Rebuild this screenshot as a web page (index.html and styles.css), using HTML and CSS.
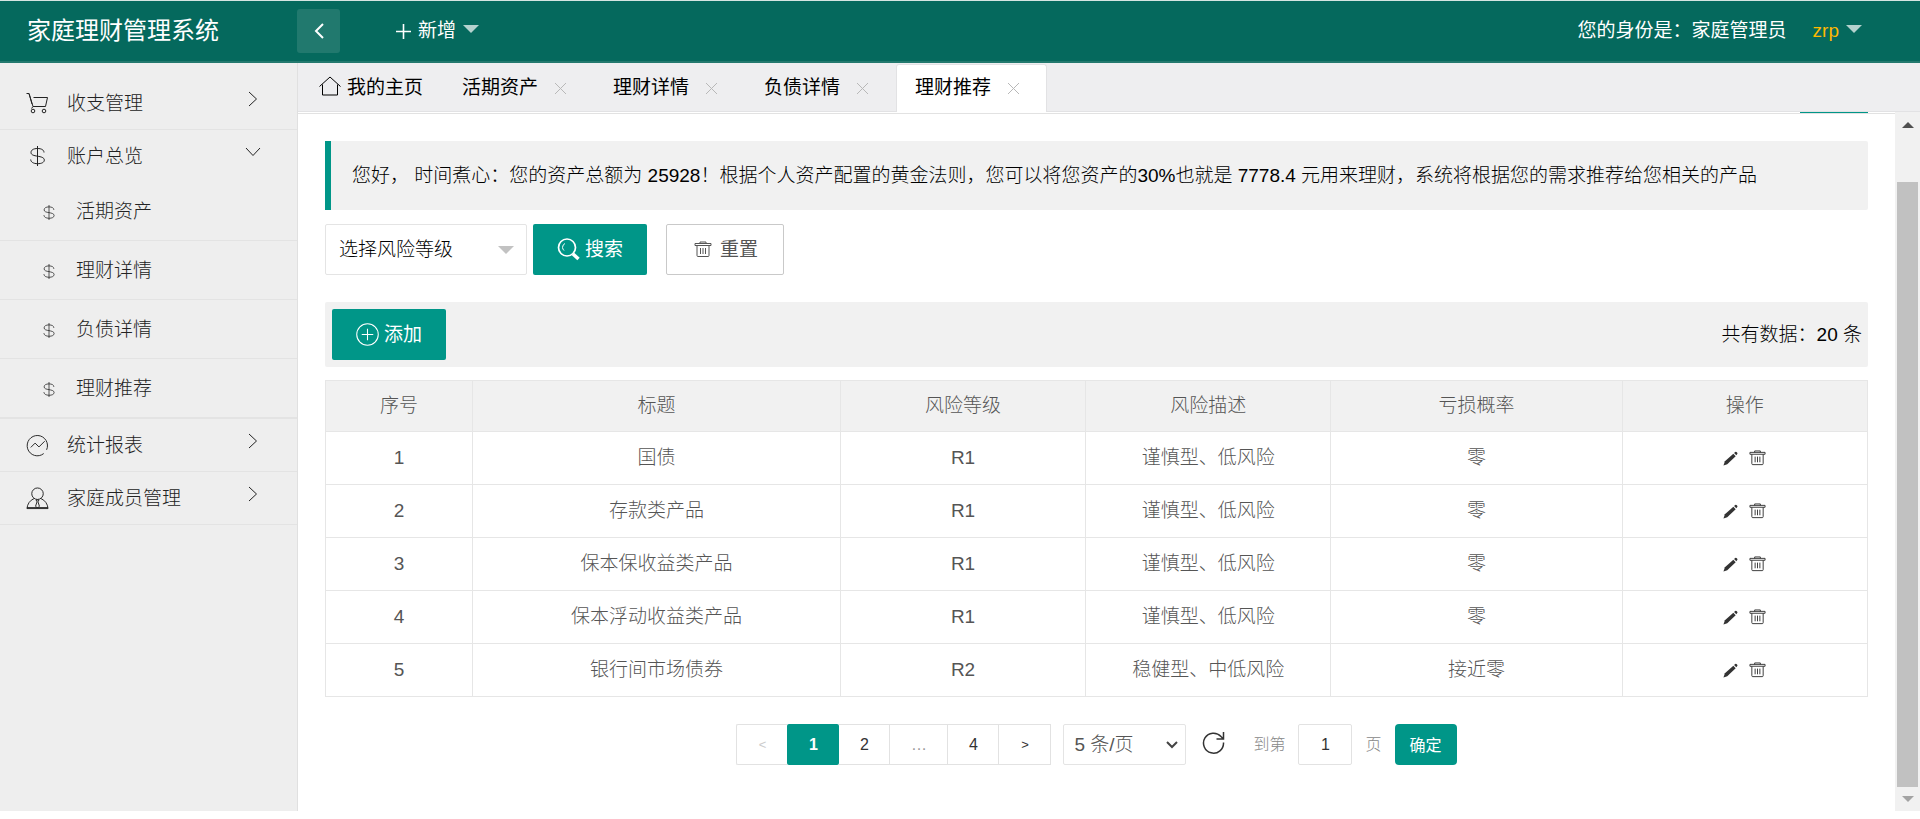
FILE: index.html
```html
<!DOCTYPE html>
<html lang="zh-CN">
<head>
<meta charset="utf-8">
<title>家庭理财管理系统</title>
<link rel="stylesheet" href="styles.css">
</head>
<body>
<svg class="sprite" aria-hidden="true">
  <symbol id="dollar" viewBox="0 0 16 22"><path d="M8 1v20M14.500 7.500C14.500 5 12 3.500 8 3.500S1.500 5 1.500 7.500C1.500 10 4.500 10.600 8 11.200S14.800 12.500 14.800 15 12 18.700 8 18.700 1.200 17 1.200 14.500"/></symbol>
  <symbol id="cart" viewBox="0 0 23 22"><path d="M0.500 1.500H3L7 14.500H19.500L21.500 5.500H7.500M3 1.500L6 12M7 14.500L5.500 16.500"/><circle cx="7" cy="19" r="1.800"/><circle cx="18" cy="19" r="1.800"/></symbol>
  <symbol id="chart" viewBox="0 0 24 24"><path d="M21.500 16.500A10.600 10.600 0 1 0 18.500 20.400M5 14L9.500 9.500 13.500 13.500 19.500 7.500"/></symbol>
  <symbol id="person" viewBox="0 0 24 24"><circle cx="12" cy="7" r="6"/><path d="M8.500 12C4 14 1.500 17.500 1 22.500H23C22.500 17.500 20 14 15.500 12M10.500 13.500H13.500L12.500 15.500 14 20 12 22 10 20 11.500 15.500ZM1 21.500H23"/></symbol>
  <symbol id="right" viewBox="0 0 10 16"><path d="M1 1L8.500 8 1 15"/></symbol>
  <symbol id="down" viewBox="0 0 16 10"><path d="M1 1L8 8.500 15 1"/></symbol>
  <symbol id="caret" viewBox="0 0 16 8"><path d="M0 0H16L8 8Z"/></symbol>
  <symbol id="close" viewBox="0 0 13 13"><path d="M1 1L12 12M12 1L1 12"/></symbol>
  <symbol id="trash" viewBox="0 0 18 18"><path d="M1 2.500H17V4.500H1ZM6 2.500V1H12V2.500M3 4.500V14.500Q3 15.500 4 15.500H14Q15 15.500 15 14.500V4.500M6.500 7V13M9 7V13M11.500 7V13"/></symbol>
  <symbol id="pencil" viewBox="0 0 16 16"><path d="M0.500 15.500L2 11 11 3 13.500 5.500 4.500 14Z"/><path d="M11.800 2L13 1Q14 .5 15 1.500T15 3.500L14.200 4.500Z"/></symbol>
</svg>

<header class="topbar">
  <h1 class="brand">家庭理财管理系统</h1>
  <button class="collapse" aria-label="收起菜单"><svg class="line" width="10" height="16" viewBox="0 0 10 16"><path d="M9 1L2 8l7 7"/></svg></button>
  <button class="topmenu">
    <svg class="line" width="15" height="15" viewBox="0 0 15 15"><path d="M7.500 0V15M0 7.500H15"/></svg>
    <span>新增</span><svg class="caret" width="16" height="8"><use href="#caret"/></svg>
  </button>
  <div class="identity">您的身份是：家庭管理员</div>
  <button class="topmenu user"><span>zrp</span><svg class="caret" width="16" height="8"><use href="#caret"/></svg></button>
</header>

<div class="body">
  <nav class="sidebar">
    <a class="item" href="#"><svg class="icon" width="23" height="22"><use href="#cart"/></svg><span>收支管理</span><svg class="arrow" width="10" height="16"><use href="#right"/></svg></a>
    <div class="group">
      <a class="item open" href="#"><svg class="icon" width="23" height="22"><use href="#dollar"/></svg><span>账户总览</span><svg class="arrow" width="16" height="10"><use href="#down"/></svg></a>
      <a class="sub" href="#"><svg class="icon" width="12" height="17"><use href="#dollar"/></svg>活期资产</a>
      <a class="sub" href="#"><svg class="icon" width="12" height="17"><use href="#dollar"/></svg>理财详情</a>
      <a class="sub" href="#"><svg class="icon" width="12" height="17"><use href="#dollar"/></svg>负债详情</a>
      <a class="sub" href="#"><svg class="icon" width="12" height="17"><use href="#dollar"/></svg>理财推荐</a>
    </div>
    <a class="item" href="#"><svg class="icon" width="23" height="23"><use href="#chart"/></svg><span>统计报表</span><svg class="arrow" width="10" height="16"><use href="#right"/></svg></a>
    <a class="item" href="#"><svg class="icon" width="23" height="23"><use href="#person"/></svg><span>家庭成员管理</span><svg class="arrow" width="10" height="16"><use href="#right"/></svg></a>
  </nav>

  <div class="main">
    <div class="tabs">
      <a class="tab home" href="#"><svg class="line" width="22" height="20" viewBox="0 0 22 20"><path d="M.5 10.500L11 1l10.500 9.500M3.500 8.500v10.500h15V8.500"/></svg>我的主页</a>
      <div class="tab"><a href="#">活期资产</a><button class="close" aria-label="关闭 活期资产"><svg width="13" height="13"><use href="#close"/></svg></button></div>
      <div class="tab"><a href="#">理财详情</a><button class="close" aria-label="关闭 理财详情"><svg width="13" height="13"><use href="#close"/></svg></button></div>
      <div class="tab"><a href="#">负债详情</a><button class="close" aria-label="关闭 负债详情"><svg width="13" height="13"><use href="#close"/></svg></button></div>
      <div class="tab active"><a href="#">理财推荐</a><button class="close" aria-label="关闭 理财推荐"><svg width="13" height="13"><use href="#close"/></svg></button></div>
    </div>

    <div class="viewport">
      <main class="page">
        <div class="crumbs"><span class="refresh-edge"></span></div>
        <blockquote class="notice">您好， 时间煮心：您的资产总额为 25928！根据个人资产配置的黄金法则，您可以将您资产的30%也就是 7778.4 元用来理财，系统将根据您的需求推荐给您相关的产品</blockquote>

        <form class="filters">
          <div class="select-wrap">
            <select class="select" aria-label="风险等级"><option>选择风险等级</option></select>
            <svg class="select-caret" width="16" height="8"><use href="#caret"/></svg>
          </div>
          <button type="button" class="btn"><svg class="line" width="23" height="23" viewBox="0 0 23 23"><circle cx="10" cy="9.500" r="8.500" stroke-width="1.700"/><path d="M5.500 9.500A4.500 4.500 0 0 1 8 5.500M5.500 9.500A5 5 0 0 0 7 12.500"/><path d="M16 16L21.500 21" stroke-width="3.500"/></svg>搜索</button>
          <button type="reset" class="btn plain"><svg class="line" width="18" height="18"><use href="#trash"/></svg>重置</button>
        </form>

        <div class="toolbar">
          <button class="btn"><svg class="line" width="23" height="23" viewBox="0 0 22 22"><circle cx="11" cy="11" r="10.300"/><path d="M11 5.500v11M5.500 11h11"/></svg>添加</button>
          <span>共有数据：20 条</span>
        </div>

        <table class="data">
          <colgroup><col class="c-no"><col class="c-title"><col class="c-level"><col class="c-level"><col class="c-rate"><col class="c-level"></colgroup>
          <thead><tr><th>序号</th><th>标题</th><th>风险等级</th><th>风险描述</th><th>亏损概率</th><th>操作</th></tr></thead>
          <tbody>
            <tr><td>1</td><td>国债</td><td>R1</td><td>谨慎型、低风险</td><td>零</td><td><button class="act" aria-label="编辑"><svg class="pencil" width="15" height="15"><use href="#pencil"/></svg></button><button class="act" aria-label="删除"><svg class="line" width="17" height="17"><use href="#trash"/></svg></button></td></tr>
            <tr><td>2</td><td>存款类产品</td><td>R1</td><td>谨慎型、低风险</td><td>零</td><td><button class="act" aria-label="编辑"><svg class="pencil" width="15" height="15"><use href="#pencil"/></svg></button><button class="act" aria-label="删除"><svg class="line" width="17" height="17"><use href="#trash"/></svg></button></td></tr>
            <tr><td>3</td><td>保本保收益类产品</td><td>R1</td><td>谨慎型、低风险</td><td>零</td><td><button class="act" aria-label="编辑"><svg class="pencil" width="15" height="15"><use href="#pencil"/></svg></button><button class="act" aria-label="删除"><svg class="line" width="17" height="17"><use href="#trash"/></svg></button></td></tr>
            <tr><td>4</td><td>保本浮动收益类产品</td><td>R1</td><td>谨慎型、低风险</td><td>零</td><td><button class="act" aria-label="编辑"><svg class="pencil" width="15" height="15"><use href="#pencil"/></svg></button><button class="act" aria-label="删除"><svg class="line" width="17" height="17"><use href="#trash"/></svg></button></td></tr>
            <tr><td>5</td><td>银行间市场债券</td><td>R2</td><td>稳健型、中低风险</td><td>接近零</td><td><button class="act" aria-label="编辑"><svg class="pencil" width="15" height="15"><use href="#pencil"/></svg></button><button class="act" aria-label="删除"><svg class="line" width="17" height="17"><use href="#trash"/></svg></button></td></tr>
          </tbody>
        </table>

        <div class="pager">
          <div class="pages">
            <button class="pg prev" disabled>&lt;</button><button class="pg current">1</button><button class="pg">2</button><span class="pg dots">…</span><button class="pg">4</button><button class="pg next">&gt;</button>
          </div>
          <div class="select-wrap size">
            <select class="select" aria-label="每页条数"><option>5 条/页</option></select>
            <svg class="select-chevron" width="12" height="8" viewBox="0 0 12 8"><path d="M1 1l5 5 5-5"/></svg>
          </div>
          <button class="reload" aria-label="刷新"><svg class="line" width="23" height="23" viewBox="0 0 23 23"><path d="M21.500 11.500A10 10 0 1 1 19 5.500L21.500 8M21.500 1V8H14.500" stroke-width="1.500"/></svg></button>
          <label class="hint" for="goto">到第</label>
          <input class="goto" id="goto" type="text" value="1">
          <span class="hint unit">页</span>
          <button class="btn confirm">确定</button>
        </div>
      </main>
      <div class="scrollbar" aria-hidden="true">
        <svg class="up" width="12" height="6" viewBox="0 0 12 6"><path d="M0 6H12L6 0Z"/></svg>
        <div class="thumb"></div>
        <svg class="dn" width="12" height="6" viewBox="0 0 12 6"><path d="M0 0H12L6 6Z"/></svg>
      </div>
    </div>
  </div>
</div>
</body>
</html>
```
FILE: styles.css
```css
* { box-sizing: border-box; }
body {
  margin: 0;
  height: 100vh;
  padding-bottom: 8px;
  display: flex;
  flex-direction: column;
  overflow: hidden;
  background: #fff;
  color: #000;
  font: 300 19px/24px "Liberation Sans", "Noto Sans CJK SC", sans-serif;
}
button, input, select { font: inherit; color: inherit; margin: 0; }
button { border: 0; background: none; padding: 0; cursor: pointer; }
a { color: inherit; text-decoration: none; }
svg { display: block; flex: none; }
.sprite { position: absolute; width: 0; height: 0; }
.line, .icon, .arrow, .close svg { fill: none; stroke: currentColor; stroke-width: 1; }

/* top bar */
.topbar {
  flex: none;
  height: 63px;
  display: flex;
  align-items: center;
  background: #05695d;
  color: #fff;
  font-weight: 400;
  border-top: 1px solid #d5e5e2;
  border-bottom: 2px solid #23796e;
}
.brand { margin: 0; width: 297px; padding-left: 27px; font-size: 24px; font-weight: 400; line-height: 32px; }
.collapse { width: 43px; height: 44px; border-radius: 3px; background: #21796e; display: flex; align-items: center; justify-content: center; }
.collapse .line { stroke-width: 2; }
.topmenu { margin-left: 56px; display: flex; align-items: center; gap: 7px; }
.topmenu .line { stroke-width: 1.6; }
.caret { fill: #b4d2ce; margin-bottom: 5px; }
.identity { margin-left: auto; }
.user { margin: 0 58px 0 26px; }
.user span { color: #ffb800; }

/* side menu */
.body { flex: 1; min-height: 0; display: flex; }
.sidebar { flex: none; width: 298px; padding-top: 14px; background: #eee; border-right: 1px solid #e0e0e0; color: #222; }
.item { height: 53px; display: flex; align-items: center; gap: 18px; padding: 0 36px 0 26px; border-bottom: 1px solid #e3e3e3; }
.item span { padding-top: 2px; }
.item .arrow { margin: 0 3px 8px auto; }
.item.open { height: 52px; border: 0; }
.item.open .arrow { margin-right: 0; }
.group { border-bottom: 1px solid #e3e3e3; }
.sub { height: 59px; display: flex; align-items: center; gap: 21px; padding: 2px 0 0 43px; border-bottom: 1px solid #e3e3e3; }

/* tabs */
.main { flex: 1; min-width: 0; display: flex; flex-direction: column; }
.tabs { flex: none; height: 49px; display: flex; padding-top: 1px; background: #eeeef0; border-bottom: 1px solid #e2e2e4; font-weight: 400; }
.tab { width: 151px; height: 48px; padding: 0 0 2px 18px; display: flex; align-items: center; gap: 16px; border: 1px solid transparent; border-bottom: 0; }
.tab.home { width: 145px; padding-left: 20px; gap: 6px; }
.tab.home .line { margin-bottom: 3px; }
.tab.active { background: #fff; border-color: #e2e2e4; border-radius: 3px 3px 0 0; }
.close { color: #b8b8b8; padding-top: 2px; }

/* page */
.viewport { flex: 1; min-height: 0; display: flex; }
.page { flex: 1; min-width: 0; padding: 0 27px; }
.crumbs { height: 2px; margin: 0 -27px; padding-right: 27px; display: flex; justify-content: flex-end; border-bottom: 1px solid #e2e2e2; }
.refresh-edge { width: 68px; background: #009688; }
.notice { margin: 27px 0 14px; padding: 23px 21px 22px; border-left: 6px solid #009688; border-radius: 0 2px 2px 0; background: #f1f1f1; }
.filters { display: flex; }
.select-wrap { position: relative; width: 202px; margin-right: 6px; }
.select { appearance: none; width: 100%; height: 51px; padding: 0 13px; border: 1px solid #e4e4e4; border-radius: 2px; background: #fff; }
.select-caret { position: absolute; right: 13px; top: 22px; fill: #c2c2c2; pointer-events: none; }
.btn { height: 51px; padding: 0 24px; display: flex; align-items: center; justify-content: center; gap: 5px; border-radius: 2px; background: #009688; color: #fff; font-weight: 400; white-space: nowrap; }
.btn.plain { margin-left: 19px; padding: 0 25px 0 27px; gap: 8px; border: 1px solid #c9c9c9; background: #fff; color: #555; }
.toolbar { margin: 27px 0 13px; padding: 7px 6px 7px 7px; display: flex; align-items: center; justify-content: space-between; background: #f1f1f1; border-radius: 2px; }

.data { width: 100%; table-layout: fixed; border-collapse: collapse; color: #555; text-align: center; }
.c-no { width: 147px; }
.c-title { width: 24%; }
.c-level { width: 16%; }
.c-rate { width: 19%; }
.data th, .data td { height: 53px; padding: 0; border: 1px solid #e6e6e6; font-weight: 300; }
.data th { height: 51px; background: #f1f1f1; }
.act { display: inline-block; vertical-align: middle; color: #333; }
.act + .act { margin-left: 11px; }
.pencil { fill: #333; }

/* pagination */
.pager { margin-top: 27px; display: flex; justify-content: center; align-items: center; color: #333; }
.pages { display: flex; margin-right: 12px; font-size: 16px; }
.pg { width: 51px; height: 41px; display: flex; align-items: center; justify-content: center; border: 1px solid #e2e2e2; border-left: 0; }
.pg.prev { border-left: 1px solid #e2e2e2; border-right: 0; border-radius: 2px 0 0 2px; color: #ccc; font-size: 13px; }
.pg.current { width: 52px; border: 0; border-radius: 2px; background: #009688; color: #fff; font-weight: 700; }
.pg.dots { width: 58px; color: #999; }
.pg.next { width: 52px; font-size: 13px; }
.size { width: 123px; margin-right: 16px; color: #555; }
.size .select { height: 41px; padding: 0 10px; }
.select-chevron { position: absolute; right: 8px; top: 17px; fill: none; stroke: #444; stroke-width: 2; pointer-events: none; }
.reload { margin-bottom: 5px; }
.hint { margin-left: 28px; color: #888; font-size: 16px; }
.goto { width: 54px; height: 41px; margin-left: 13px; padding: 0; border: 1px solid #e2e2e2; border-radius: 2px; text-align: center; font-size: 16px; }
.hint.unit { margin-left: 13px; }
.confirm { height: 41px; margin-left: 13px; padding: 3px 15px 0; border-radius: 4px; font-size: 16px; }

/* scroll bar */
.scrollbar { flex: none; width: 25px; padding: 10px 2px 9px; display: flex; flex-direction: column; background: #f1f1f1; }
.up, .dn { align-self: center; }
.up { margin-bottom: 54px; fill: #505050; }
.thumb { flex: 1; align-self: stretch; background: #c1c1c1; }
.dn { margin-top: 9px; fill: #a3a3a3; }
```
